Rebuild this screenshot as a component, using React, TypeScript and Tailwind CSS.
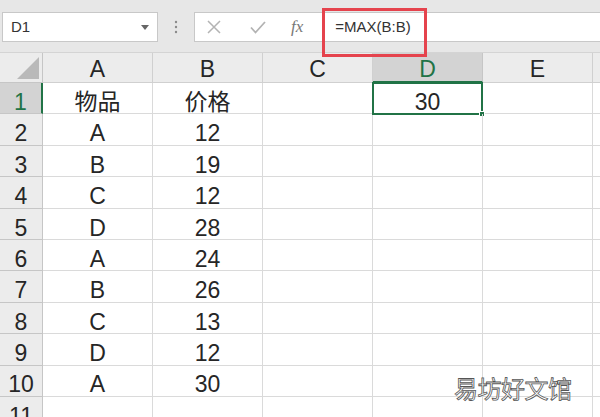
import type { JSX } from 'react';

// Excel-like sheet: formula bar + grid, D1 selected with =MAX(B:B)

const COLS = ['A', 'B', 'C', 'D', 'E'];
const ROWS: [string, string][] = [
  ['物品', '价格'],
  ['A', '12'],
  ['B', '19'],
  ['C', '12'],
  ['D', '28'],
  ['A', '24'],
  ['B', '26'],
  ['C', '13'],
  ['D', '12'],
  ['A', '30'],
];

const font = "font-['Liberation_Sans','Noto_Sans_CJK_SC',sans-serif]";

export default function App(): JSX.Element {
  return (
    <div className={`relative h-[417px] w-[600px] overflow-hidden bg-white text-[#262626] ${font}`}>
      {/* Formula bar */}
      <div className="flex h-[53px] items-start border-b border-[#d4d4d4] bg-[#e7e7e7] pt-[12px]">
        <div className="ml-[2px] flex h-[30px] w-[156px] items-center border border-[#c8c8c8] bg-white pl-[8px] pr-[8px]">
          <span className="flex-1 text-[15px] text-[#333]">D1</span>
          <DropIcon />
        </div>
        <div className="flex h-[30px] w-[36px] items-center justify-center">
          <DotsIcon />
        </div>
        <div className="flex h-[30px] flex-1 items-center border border-r-0 border-[#c8c8c8] bg-white">
          <div className="ml-[12px] text-[#b3b3b3]">
            <CrossIcon />
          </div>
          <div className="ml-[29px] text-[#b3b3b3]">
            <CheckIcon />
          </div>
          <span className="ml-[25px] font-['Liberation_Serif',serif] text-[17px] italic text-[#777]">fx</span>
          <span className="ml-[32px] text-[15px] text-[#333]">=MAX(B:B)</span>
        </div>
      </div>

      {/* Column headers */}
      <div className="flex h-[30px]">
        <div className="flex w-[43px] shrink-0 items-end justify-end border-r border-b border-[#c6c6c6] bg-[#ececec] pb-[3px] pr-[3px]">
          <svg width="22" height="22" viewBox="0 0 22 22" aria-hidden="true">
            <path d="M22 0L22 22L0 22Z" fill="#b9b9b9" />
          </svg>
        </div>
        {COLS.map((c) => {
          const sel = c === 'D';
          return (
            <div
              key={c}
              className={
                sel
                  ? 'flex w-[110px] shrink-0 items-center justify-center border-r border-b-2 border-r-[#c6c6c6] border-b-[#217346] bg-[#d3d3d3] pt-[4px] text-[23px] text-[#217346]'
                  : 'flex w-[110px] shrink-0 items-center justify-center border-r border-b border-[#d0d0d0] bg-[#ececec] pt-[4px] text-[23px] text-[#262626]'
              }
            >
              {c}
            </div>
          );
        })}
        <div className="flex-1 border-b border-[#d0d0d0] bg-[#ececec]" />
      </div>

      {/* Rows */}
      {ROWS.map((r, i) => (
        <Row key={i} n={i + 1} a={r[0]} b={r[1]} d={i === 0 ? '30' : ''} />
      ))}
      <Row n={11} a="" b="" d="" />

      {/* Highlight around the formula */}
      <div className="absolute left-[322px] top-[8px] h-[49px] w-[105px] border-[3px] border-[#e5434d]" />

      {/* Watermark */}
      <div className="absolute left-[454px] top-[370px] font-['Noto_Sans_CJK_SC',sans-serif] text-[24px] font-normal tracking-[-0.5px] text-white [-webkit-text-stroke:0.8px_#555]">
        易坊好文馆
      </div>
    </div>
  );
}

function Row({ n, a, b, d }: { n: number; a: string; b: string; d: string }): JSX.Element {
  const sel = n === 1;
  return (
    <div className="flex h-[31.4px]">
      <div
        className={
          sel
            ? 'flex w-[43px] shrink-0 items-center justify-center border-r-2 border-b border-r-[#217346] border-b-[#c6c6c6] bg-[#d3d3d3] pt-[8px] text-[23px] text-[#217346]'
            : 'flex w-[43px] shrink-0 items-center justify-center border-r border-b border-[#c6c6c6] bg-[#ececec] pt-[8px] text-[23px] text-[#262626]'
        }
      >
        {n}
      </div>
      <Cell text={a} />
      <Cell text={b} />
      <Cell text="" />
      <div className="relative flex w-[110px] shrink-0 items-center justify-center border-r border-b border-[#dadada] pt-[8px] text-[23px]">
        {d}
        {sel && (
          <div className="absolute -left-[1px] -top-[1px] h-[33px] w-[111px] border-2 border-[#217346]">
            <div className="absolute -bottom-[4px] -right-[4px] h-[6px] w-[6px] border border-white bg-[#217346]" />
          </div>
        )}
      </div>
      <Cell text="" />
      <div className="flex-1 border-b border-[#dadada]" />
    </div>
  );
}

function Cell({ text }: { text: string }): JSX.Element {
  return (
    <div className="flex w-[110px] shrink-0 items-center justify-center border-r border-b border-[#dadada] pt-[8px] text-[23px]">
      {text}
    </div>
  );
}

function DropIcon(): JSX.Element {
  return (
    <svg width="8" height="5" viewBox="0 0 8 5" aria-hidden="true">
      <path d="M0 0h8L4 5z" fill="#666" />
    </svg>
  );
}

function DotsIcon(): JSX.Element {
  return (
    <svg width="4" height="14" viewBox="0 0 4 14" aria-hidden="true">
      <circle cx="2" cy="2" r="1.2" fill="#8a8a8a" />
      <circle cx="2" cy="7" r="1.2" fill="#8a8a8a" />
      <circle cx="2" cy="12" r="1.2" fill="#8a8a8a" />
    </svg>
  );
}

function CrossIcon(): JSX.Element {
  return (
    <svg width="14" height="14" viewBox="0 0 14 14" fill="none" stroke="currentColor" strokeWidth="1.5" aria-hidden="true">
      <path d="M1 1l12 12M13 1L1 13" />
    </svg>
  );
}

function CheckIcon(): JSX.Element {
  return (
    <svg width="16" height="13" viewBox="0 0 16 13" fill="none" stroke="currentColor" strokeWidth="1.8" aria-hidden="true">
      <path d="M1 6.5l4.5 5L15 1" />
    </svg>
  );
}
